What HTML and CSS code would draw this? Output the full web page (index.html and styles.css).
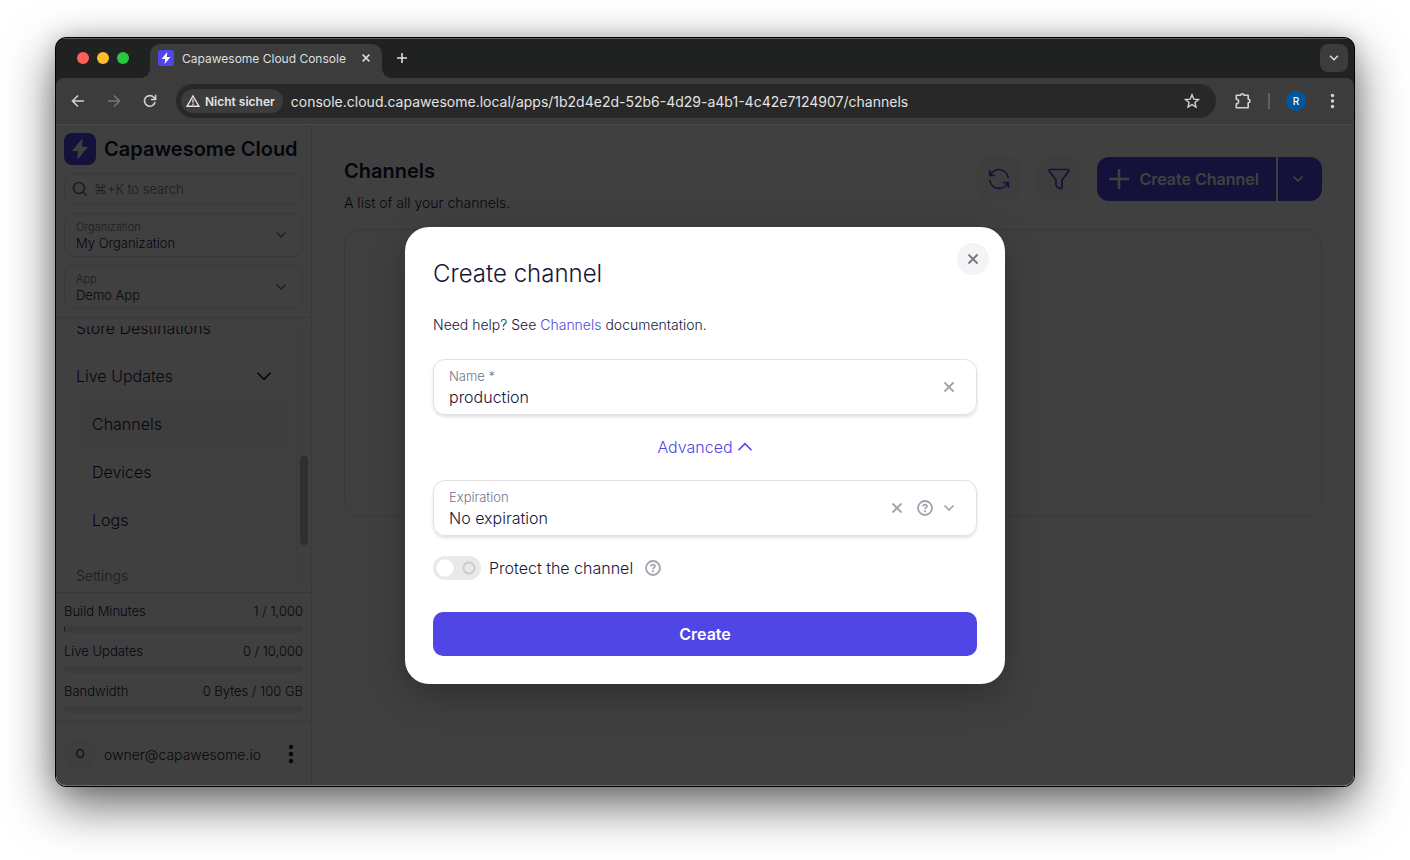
FILE: index.html
```html
<!DOCTYPE html>
<html lang="en">
<head>
<meta charset="utf-8">
<meta name="viewport" content="width=device-width, initial-scale=1">
<title>Capawesome Cloud Console</title>
<link rel="stylesheet" href="styles.css">
</head>
<body>
<svg class="sprite" aria-hidden="true">
  <symbol id="bolt" viewBox="0 0 32 32"><path d="M18 6.500 8.700 17.500h6L13.700 25.500 23.300 14.200h-6z" fill="currentColor" stroke="currentColor" stroke-width="1" stroke-linejoin="round"/></symbol>
  <symbol id="bolt-small" viewBox="0 0 16 16"><path d="M9.300 2 3.500 9h3.700l-.6 5 5.900-7H8.800z" fill="currentColor"/></symbol>
  <symbol id="chevron" viewBox="0 0 16 16"><path d="m3.500 5.500 4.500 4.500 4.500-4.500" fill="none" stroke="currentColor" stroke-width="1.700"/></symbol>
  <symbol id="chevron-wide" viewBox="0 0 16 16"><path d="m1.500 4.800 6.500 6.500 6.500-6.500" fill="none" stroke="currentColor" stroke-width="1.600"/></symbol>
  <symbol id="cross" viewBox="0 0 16 16"><path d="m3.500 3.500 9 9m0-9-9 9" fill="none" stroke="currentColor" stroke-width="1.900"/></symbol>
  <symbol id="help" viewBox="0 0 16 16"><circle cx="8" cy="8" r="7" fill="none" stroke="currentColor" stroke-width="1.800"/><path d="M6 6.500c0-1.200.9-1.900 2-1.900s2 .7 2 1.700c0 1.300-2 1.400-2 2.900" fill="none" stroke="currentColor" stroke-width="1.700"/><circle cx="8" cy="11.300" r="1.100" fill="currentColor"/></symbol>
  <symbol id="kebab" viewBox="0 0 6 20"><circle cx="3" cy="3" r="2.200"/><circle cx="3" cy="10" r="2.200"/><circle cx="3" cy="17" r="2.200"/></symbol>
</svg>
<div class="window">
  <header class="tabstrip">
    <div class="lights"><span class="light red"></span><span class="light amber"></span><span class="light green"></span></div>
    <div class="tab">
      <span class="favicon"><svg width="16" height="16"><use href="#bolt-small"/></svg></span>
      <span class="tab-title">Capawesome Cloud Console</span>
      <button class="bare" aria-label="Close tab"><svg width="12" height="12"><use href="#cross"/></svg></button>
    </div>
    <button class="bare" aria-label="New tab"><svg width="12" height="12" viewBox="0 0 12 12"><path d="M6 1v10M1 6h10" stroke="currentColor" stroke-width="1.600"/></svg></button>
    <button class="bare tab-search" aria-label="Search tabs"><svg width="14" height="14"><use href="#chevron"/></svg></button>
  </header>
  <div class="toolbar">
    <button class="bare" aria-label="Back"><svg width="16" height="16" viewBox="0 0 16 16"><path d="M14 8H3m5-5.500L2.500 8 8 13.500" fill="none" stroke="currentColor" stroke-width="1.600"/></svg></button>
    <button class="bare dim" aria-label="Forward"><svg width="16" height="16" viewBox="0 0 16 16"><path d="M2 8h11M8 2.500 13.500 8 8 13.500" fill="none" stroke="currentColor" stroke-width="1.600"/></svg></button>
    <button class="bare" aria-label="Reload"><svg width="16" height="16" viewBox="0 0 16 16"><path d="M13 9a5.300 5.300 0 1 1-1.300-4.700L13.300 6M13.600 1.800v4.700H9" fill="none" stroke="currentColor" stroke-width="1.600"/></svg></button>
    <div class="address">
      <button class="security"><svg width="14" height="14" viewBox="0 0 14 14"><path d="M7 2 13 12.300H1z" fill="none" stroke="currentColor" stroke-width="1.400"/><path d="M7 5.300v3.400M7 9.600V11" stroke="currentColor" stroke-width="1.300"/></svg>Nicht sicher</button>
      <input class="url" type="text" aria-label="Address" value="console.cloud.capawesome.local/apps/1b2d4e2d-52b6-4d29-a4b1-4c42e7124907/channels">
      <button class="bare" aria-label="Bookmark"><svg width="16" height="16" viewBox="0 0 16 16"><path d="m8 1.800 1.800 4.300 4.700.4-3.600 3 1.100 4.600L8 11.600l-4 2.500 1.100-4.600-3.600-3 4.700-.4z" fill="none" stroke="currentColor" stroke-width="1.400"/></svg></button>
    </div>
    <button class="bare" aria-label="Extensions"><svg width="18" height="18" viewBox="0 0 18 18"><path d="M2.300 3.300h4.400a1.600 1.600 0 0 1 3.200 0h4.300v4a1.700 1.700 0 0 1 0 3.400v5H2.300v-3.800a2.300 2.300 0 0 0 0-4.600z" fill="none" stroke="currentColor" stroke-width="1.600" stroke-linejoin="round"/></svg></button>
    <span class="divider"></span>
    <button class="profile" aria-label="Profile">R</button>
    <button class="bare" aria-label="Browser menu"><svg class="dots" width="5" height="16"><use href="#kebab"/></svg></button>
  </div>

  <div class="viewport">
    <aside class="sidebar">
      <div class="side-top">
        <div class="brand"><span class="logo"><svg width="32" height="32"><use href="#bolt"/></svg></span>Capawesome Cloud</div>
        <label class="search"><svg width="16" height="16" viewBox="0 0 16 16"><circle cx="7" cy="7" r="5.500" fill="none" stroke="currentColor" stroke-width="1.700"/><path d="m11 11 3.500 3.500" stroke="currentColor" stroke-width="1.700"/></svg><input type="search" placeholder="⌘+K to search" aria-label="Search"></label>
        <div class="picker"><div class="picker-text"><label for="org">Organization</label><select id="org"><option>My Organization</option></select></div><svg width="16" height="16"><use href="#chevron"/></svg></div>
        <div class="picker"><div class="picker-text"><label for="app">App</label><select id="app"><option>Demo App</option></select></div><svg width="16" height="16"><use href="#chevron"/></svg></div>
      </div>
      <div class="nav-area">
        <nav class="nav">
          <a class="nav-item" href="#">Store Destinations</a>
          <a class="nav-item" href="#">Live Updates<svg width="16" height="16"><use href="#chevron-wide"/></svg></a>
          <a class="nav-item sub active" href="#">Channels</a>
          <a class="nav-item sub" href="#">Devices</a>
          <a class="nav-item sub" href="#">Logs</a>
          <span class="nav-heading">Settings</span>
        </nav>
        <div class="track"><div class="thumb"></div></div>
      </div>
      <div class="usage">
        <div class="meter"><span>Build Minutes</span><span>1 / 1,000</span><div class="bar"><div class="fill" style="width:0.1%"></div></div></div>
        <div class="meter"><span>Live Updates</span><span>0 / 10,000</span><div class="bar"></div></div>
        <div class="meter"><span>Bandwidth</span><span>0 Bytes / 100 GB</span><div class="bar"></div></div>
      </div>
      <div class="account">
        <span class="avatar">O</span><span class="email">owner@capawesome.io</span>
        <button class="bare kebab" aria-label="Account menu"><svg width="6" height="20"><use href="#kebab"/></svg></button>
      </div>
    </aside>
    <main class="main">
      <div class="page-head">
        <div class="page-title"><h1>Channels</h1><p>A list of all your channels.</p></div>
        <div class="actions">
          <button class="tool" aria-label="Refresh"><svg width="24" height="24" viewBox="0 0 24 24"><path d="M2.700 3v5.500h5.500M3.500 8A9.300 9.300 0 0 1 21.200 11M21.300 21v-5.500h-5.500M20.500 16A9.300 9.300 0 0 1 2.800 13" fill="none" stroke="currentColor" stroke-width="1.700"/></svg></button>
          <button class="tool" aria-label="Filter"><svg width="24" height="24" viewBox="0 0 24 24"><path d="M3 2.500h18c1 0 1.300.9.800 1.600L15 13v7c0 1.500-1.500 2-2.500 1.300l-2.700-1.800c-.5-.3-.8-.8-.8-1.400V13L2.200 4.100C1.700 3.400 2 2.500 3 2.500z" fill="none" stroke="currentColor" stroke-width="1.700" stroke-linejoin="round"/></svg></button>
          <div class="split">
            <button class="split-main"><svg width="20" height="20" viewBox="0 0 20 20"><path d="M10 1v18M1 10h18" stroke="currentColor" stroke-width="2.600" stroke-linecap="round"/></svg>Create Channel</button>
            <button class="split-more" aria-label="More create options"><svg width="16" height="16"><use href="#chevron"/></svg></button>
          </div>
        </div>
      </div>
      <section class="card"></section>
    </main>

    <div class="overlay">
      <form class="dialog" role="dialog" aria-labelledby="dialog-title">
        <button type="button" class="close" aria-label="Close"><svg width="16" height="16"><use href="#cross"/></svg></button>
        <h2 id="dialog-title">Create channel</h2>
        <p class="hint">Need help? See <a href="#">Channels</a> documentation.</p>
        <div class="field">
          <div class="field-text"><label for="name">Name *</label><input id="name" type="text" value="production"></div>
          <button type="button" class="bare" aria-label="Clear name"><svg width="16" height="16"><use href="#cross"/></svg></button>
        </div>
        <button type="button" class="advanced">Advanced<svg class="up" width="16" height="16"><use href="#chevron-wide"/></svg></button>
        <div class="field">
          <div class="field-text"><label for="expiration">Expiration</label><select id="expiration"><option>No expiration</option></select></div>
          <div class="field-icons">
            <button type="button" class="bare clear" aria-label="Clear expiration"><svg width="16" height="16"><use href="#cross"/></svg></button>
            <button type="button" class="bare" aria-label="About expiration"><svg width="16" height="16"><use href="#help"/></svg></button>
            <svg width="16" height="16"><use href="#chevron"/></svg>
          </div>
        </div>
        <div class="protect">
          <input class="switch" id="protect" type="checkbox" role="switch">
          <label for="protect">Protect the channel</label>
          <button type="button" class="bare" aria-label="About protection"><svg width="16" height="16"><use href="#help"/></svg></button>
        </div>
        <button type="submit" class="submit">Create</button>
      </form>
    </div>
  </div>
</div>
</body>
</html>
```

FILE: styles.css
```css
* { box-sizing: border-box; }

:root {
  --ink: #16163a;
  --muted: #72738a;
  --line: #e2e2e5;
  --primary: #4f46e5;
}

body {
  margin: 0;
  min-height: 100vh;
  padding: 37px 55px 73px;
  display: flex;
  background: #fff;
  color: var(--ink);
  font-family: Inter, "Liberation Sans", sans-serif;
  font-weight: 300;
}

button, input, select { font: inherit; color: inherit; }
button { border: 0; padding: 0; background: none; cursor: pointer; }
input, select { border: 0; padding: 0; margin: 0; background: none; outline: none; min-width: 0; }
select { appearance: none; }
a { text-decoration: none; color: inherit; }
h1, h2, p { margin: 0; }
svg { display: block; flex: none; }
.sprite { position: absolute; width: 0; height: 0; }
.bare { display: flex; align-items: center; justify-content: center; }

/* Browser window */
.window {
  flex: 1;
  min-width: 0;
  display: flex;
  flex-direction: column;
  overflow: hidden;
  border: 1px solid #000;
  border-radius: 11px;
  background: #202221;
  box-shadow: 0 18px 50px rgba(0, 0, 0, .6), 0 0 20px rgba(0, 0, 0, .16);
}

.tabstrip {
  display: flex;
  align-items: center;
  height: 40px;
  padding: 0 6px 0 21px;
  color: #dfdfdf;
  box-shadow: inset 0 1px #575857;
}
.lights { display: flex; gap: 8px; margin-right: 21px; }
.light { width: 12px; height: 12px; border-radius: 50%; }
.red { background: #ff5f57; }
.amber { background: #febc2e; }
.green { background: #28c840; }
.tab {
  position: relative;
  display: flex;
  align-items: center;
  align-self: flex-end;
  width: 232px;
  height: 34px;
  padding: 0 10px 6px 8px;
  margin-right: 14px;
  border-radius: 10px 10px 0 0;
  background: #3c3c3c;
}
.tab::before, .tab::after {
  content: "";
  position: absolute;
  bottom: 0;
  width: 10px;
  height: 10px;
}
.tab::before { left: -10px; background: radial-gradient(circle at 0 0, transparent 10px, #3c3c3c 10px); }
.tab::after { right: -10px; background: radial-gradient(circle at 100% 0, transparent 10px, #3c3c3c 10px); }
.favicon { margin-right: 8px; border-radius: 2px; background: var(--primary); color: #fff; }
.tab-title { flex: 1; font-size: 12px; font-weight: 400; white-space: nowrap; }
.tab-search { width: 28px; height: 28px; margin-left: auto; border-radius: 8px; background: #3c3c3c; }

.toolbar {
  display: flex;
  align-items: center;
  gap: 20px;
  height: 47px;
  padding: 0 19px 0 14px;
  border-bottom: 1px solid #484848;
  border-radius: 8px 8px 0 0;
  background: #3c3c3c;
  color: #d0d0d0;
}
.dim { color: #777; }
.address {
  flex: 1;
  display: flex;
  align-items: center;
  gap: 8px;
  height: 34px;
  margin: 0 -2px;
  padding: 0 16px 0 5px;
  border-radius: 17px;
  background: #282828;
}
.security {
  display: flex;
  align-items: center;
  gap: 5px;
  height: 24px;
  padding: 0 8px 0 5px;
  border-radius: 12px;
  background: #3c3c3c;
  color: #e3e3e3;
  font-size: 12px;
  font-weight: 600;
  white-space: nowrap;
}
.url { flex: 1; color: #e3e3e3; font-size: 14px; font-weight: 400; }
.divider { width: 2px; height: 16px; margin: 0 -4px; background: #606060; }
.profile { width: 20px; height: 20px; margin-right: 4px; border-radius: 50%; background: #00569c; color: #fff; font-size: 10px; font-weight: 500; }
.dots { fill: #d0d0d0; }

/* Page */
.viewport { position: relative; flex: 1; display: flex; background: #fff; }

.sidebar {
  flex: none;
  width: 256px;
  display: flex;
  flex-direction: column;
  border-right: 1px solid var(--line);
}
.side-top { display: flex; flex-direction: column; gap: 8px; padding: 8px; border-bottom: 1px solid var(--line); }
.brand { display: flex; align-items: center; gap: 8px; font-size: 20px; font-weight: 600; white-space: nowrap; }
.logo { border-radius: 8px; background: var(--primary); color: #fff; }
.search, .picker { display: flex; align-items: center; border: 1px solid var(--line); border-radius: 10px; }
.search { height: 32px; gap: 6px; padding: 0 7px; color: var(--muted); font-size: 13px; }
.search input { flex: 1; }
.search input::placeholder { color: var(--muted); opacity: 1; }
.picker { height: 44px; padding: 0 13px 0 11px; }
.picker svg { color: #8a8b99; }
.picker-text { flex: 1; display: flex; flex-direction: column; }
.picker-text label { color: var(--muted); font-size: 11px; line-height: 16px; }
.picker-text select { height: 16px; font-size: 13px; line-height: 16px; }

.nav-area { flex: 1; display: flex; margin: 8px 0; min-height: 0; overflow: hidden; }
.nav { flex: 1; display: flex; flex-direction: column; gap: 4px; margin-top: -20px; padding: 0 8px; }
.nav-item {
  flex: none;
  display: flex;
  align-items: center;
  justify-content: space-between;
  height: 44px;
  padding: 0 16px 0 12px;
  border-radius: 10px;
  font-size: 16px;
}
.sub { margin-left: 16px; }
.active { background: #f7f7f8; }
.nav-heading { height: 38px; padding: 20px 12px 0; color: var(--muted); font-size: 14px; line-height: 20px; }
.track { width: 15px; padding: 130px 3px 39px; border-left: 1px solid #f0f0f0; background: #fbfbfb; }
.thumb { height: 100%; border-radius: 4px; background: #bbbbc0; }

.usage { display: flex; flex-direction: column; gap: 8px; padding: 8px; border: solid var(--line); border-width: 1px 0; }
.meter {
  display: grid;
  grid-template-columns: 1fr auto;
  row-gap: 4px;
  font-size: 13px;
  line-height: 20px;
}
.bar { grid-column: 1 / 3; height: 8px; border-radius: 4px; overflow: hidden; background: #eaeaec; }
.fill { height: 100%; min-width: 1px; border-radius: 4px; background: var(--primary); }

.account { display: flex; align-items: center; gap: 8px; height: 64px; padding: 0 17px 0 8px; font-size: 14px; }
.avatar { width: 32px; height: 32px; border-radius: 50%; background: #f6f6f7; font-size: 12px; font-weight: 400; line-height: 32px; text-align: center; }
.email { flex: 1; }
.kebab svg { fill: var(--ink); }

.main { flex: 1; min-width: 0; padding: 32px; }
.page-head { display: flex; justify-content: space-between; margin-bottom: 16px; }
.page-title { display: flex; flex-direction: column; gap: 8px; }
.page-title h1 { font-size: 20px; line-height: 28px; font-weight: 600; }
.page-title p { font-size: 14px; line-height: 20px; }
.actions { display: flex; gap: 16px; height: 44px; }
.tool { display: flex; align-items: center; justify-content: center; width: 44px; border-radius: 12px; background: #f5f5f6; color: var(--primary); }
.split { display: flex; gap: 2px; color: #fff; font-size: 16px; font-weight: 600; }
.split-main { display: flex; align-items: center; gap: 10px; padding: 0 17px 0 12px; border-radius: 12px 0 0 12px; background: var(--primary); white-space: nowrap; }
.split-more { display: flex; align-items: center; width: 44px; padding-left: 12px; border-radius: 0 12px 12px 0; background: var(--primary); }
.card { height: 288px; border: 1px solid var(--line); border-radius: 16px; }

/* Dialog */
.overlay {
  position: absolute;
  inset: 0;
  display: flex;
  align-items: center;
  justify-content: center;
  background: rgba(0, 0, 0, .75);
  border-radius: 0 0 10px 10px;
  box-shadow: inset 0 -1px #6a6a6a;
}
.dialog {
  position: relative;
  display: flex;
  flex-direction: column;
  width: 600px;
  max-width: 90%;
  padding: 28px;
  border-radius: 24px;
  background: #fff;
  box-shadow: 0 12px 36px rgba(0, 0, 0, .28);
}
.close {
  position: absolute;
  top: 16px;
  right: 16px;
  display: flex;
  align-items: center;
  justify-content: center;
  width: 32px;
  height: 32px;
  border-radius: 50%;
  background: #f4f4f6;
  color: #777785;
}
.dialog h2 { margin: 3px 0 23px; font-size: 24px; line-height: 32px; font-weight: 300; }
.hint { margin-bottom: 22px; font-size: 14px; line-height: 24px; }
.hint a { color: var(--primary); }
.field {
  display: flex;
  align-items: center;
  height: 56px;
  padding: 0 19px 0 15px;
  border: 1px solid var(--line);
  border-radius: 12px;
  box-shadow: 0 2px 3px rgba(0, 0, 0, .12);
  color: #a3a3ae;
}
.field-text { flex: 1; display: flex; flex-direction: column; }
.field-text label { color: var(--muted); font-size: 13px; line-height: 20px; }
.field-text input, .field-text select { height: 22px; color: var(--ink); font-size: 16px; line-height: 22px; }
.field-icons { display: flex; align-items: center; gap: 8px; }
.clear { margin-right: 4px; }
.advanced {
  display: flex;
  align-items: center;
  align-self: center;
  gap: 4px;
  margin: 20px 0 21px;
  color: var(--primary);
  font-size: 16px;
  line-height: 24px;
}
.up { transform: rotate(180deg); }
.protect { display: flex; align-items: center; margin: 20px 0 32px; font-size: 16px; line-height: 24px; }
.protect label { margin: 0 12px 0 8px; }
.protect .bare { color: #a3a3ae; }
.switch {
  appearance: none;
  width: 48px;
  height: 24px;
  border-radius: 12px;
  background:
    radial-gradient(circle at 12px 12px, #fff 8px, transparent 9px),
    radial-gradient(circle at 36px 12px, transparent 4px, #cdcdd1 5px, #cdcdd1 6px, transparent 7px),
    #e9e9ea;
}
.submit { height: 44px; border-radius: 10px; background: var(--primary); color: #fff; font-size: 16px; font-weight: 600; }
```
